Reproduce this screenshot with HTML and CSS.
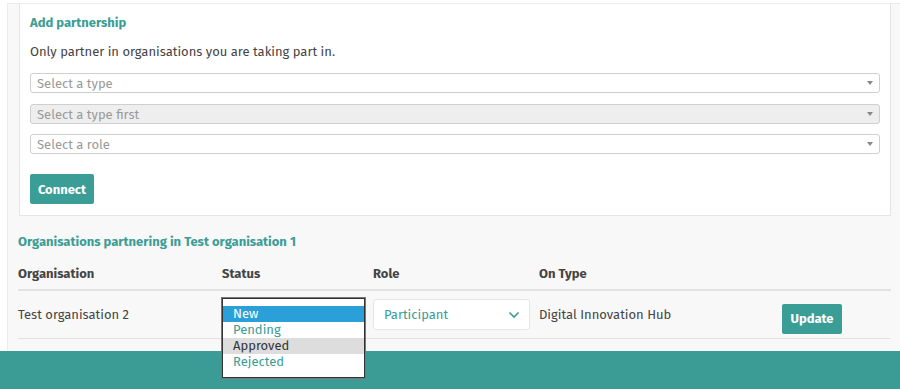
FILE: index.html
```html
<!DOCTYPE html>
<html lang="en">
<head>
    <meta charset="UTF-8">
    <title>Partnerships</title>
    <link rel="stylesheet" href="styles.css">
</head>
<body>
    <div class="page">
        <section class="card">
            <h3 class="title">Add partnership</h3>
            <p class="intro">Only partner in organisations you are taking part in.</p>
            <div class="select"><span>Select a type</span><i class="caret"></i></div>
            <div class="select disabled"><span>Select a type first</span><i class="caret"></i></div>
            <div class="select"><span>Select a role</span><i class="caret"></i></div>
            <button class="btn btn-connect">Connect</button>
        </section>

        <h3 class="title list-title">Organisations partnering in Test organisation 1</h3>
        <table class="partners">
            <thead>
                <tr>
                    <th class="col-org">Organisation</th>
                    <th class="col-status">Status</th>
                    <th class="col-role">Role</th>
                    <th class="col-type">On Type</th>
                    <th></th>
                </tr>
            </thead>
            <tbody>
                <tr>
                    <td>Test organisation 2</td>
                    <td class="status-cell">
                        <ul class="dropdown">
                            <li class="selected">New</li>
                            <li>Pending</li>
                            <li class="hover">Approved</li>
                            <li>Rejected</li>
                        </ul>
                    </td>
                    <td>
                        <div class="role-select">
                            <span>Participant</span>
                            <svg width="12" height="8" viewBox="0 0 12 8"><path d="M1.5 1.5 L6 6 L10.5 1.5" fill="none" stroke="#3a9d96" stroke-width="1.6"/></svg>
                        </div>
                    </td>
                    <td>Digital Innovation Hub</td>
                    <td><button class="btn btn-update">Update</button></td>
                </tr>
            </tbody>
        </table>
    </div>
    <footer class="footer"></footer>
</body>
</html>
```

FILE: styles.css
```css
:root {
    --teal: #3a9d96;
    --text: #444;
    --muted: #999;
    --line: #e2e2e2;
}

body {
    margin: 0;
    background-color: #fff;
    font-family: "Fira Sans", "Lato", "Liberation Sans", sans-serif;
    font-size: 13px;
    color: var(--text);
}

.page {
    margin-left: 7px;
    margin-top: 3px;
    border-left: 1px solid #ececec;
    border-top: 1px solid #ececec;
    background-color: #f8f8f8;
    padding: 0 9px 0 10px;
    height: 348px;
    box-sizing: border-box;
}

.card {
    background-color: #fff;
    border: 1px solid #e6e6e6;
    border-top: none;
    padding: 10px 10px 11px 10px;
    margin-left: 1px;
}

.title {
    color: var(--teal);
    font-size: 13px;
    font-weight: bold;
    margin: 0;
    line-height: 18px;
}

.intro {
    margin: 11px 0 12px 0;
    line-height: 18px;
}

.select {
    display: flex;
    align-items: center;
    justify-content: space-between;
    height: 18px;
    border: 1px solid #cfcfcf;
    border-radius: 3px;
    padding: 0 6px;
    margin-bottom: 10px;
    color: var(--muted);
    background-color: #fff;
}

.select:first-of-type {
    margin-bottom: 11px;
}

.select.disabled {
    background-color: #eee;
}

.caret {
    width: 0;
    height: 0;
    border-left: 3px solid transparent;
    border-right: 3px solid transparent;
    border-top: 4px solid #888;
}

.btn {
    background-color: var(--teal);
    color: #fff;
    border: none;
    border-radius: 2px;
    font-family: inherit;
    font-size: 13px;
    font-weight: bold;
    cursor: pointer;
}

.btn-connect {
    margin-top: 20px;
    width: 64px;
    height: 30px;
    padding: 0;
    display: block;
}

.list-title {
    margin-top: 17px;
}

.partners {
    width: 100%;
    border-collapse: collapse;
    margin-top: 14px;
}

.partners th {
    text-align: left;
    font-weight: bold;
    padding: 0 0 6px 0;
    border-bottom: 2px solid var(--line);
    line-height: 18px;
}

.col-org { width: 204px; }
.col-status { width: 151px; }
.col-role { width: 166px; }
.col-type { width: 243px; }

.partners td {
    height: 47px;
    padding: 0;
    border-bottom: 1px solid var(--line);
    vertical-align: middle;
}

.status-cell {
    position: relative;
}

.dropdown {
    position: absolute;
    left: 0;
    top: 7px;
    width: 141px;
    margin: 0;
    padding: 7px 0 7px 0;
    list-style: none;
    background-color: #fff;
    border: 1px solid #333;
    box-shadow: 0 0 0 1px #777;
    z-index: 2;
}

.dropdown li {
    line-height: 16px;
    padding-left: 10px;
    color: var(--teal);
}

.dropdown li.selected {
    background-color: #2a9fd8;
    color: #fff;
}

.dropdown li.hover {
    background-color: #ddd;
    color: #333;
}

.role-select {
    display: flex;
    align-items: center;
    justify-content: space-between;
    width: 157px;
    height: 31px;
    box-sizing: border-box;
    border: 1px solid #e6e6e6;
    border-radius: 3px;
    background-color: #fff;
    padding: 0 9px 0 10px;
    color: var(--teal);
}

.btn-update {
    width: 60px;
    height: 30px;
    padding: 0;
    margin-top: 8px;
}

.footer {
    background-color: #3b9c96;
    height: 50px;
}
```
